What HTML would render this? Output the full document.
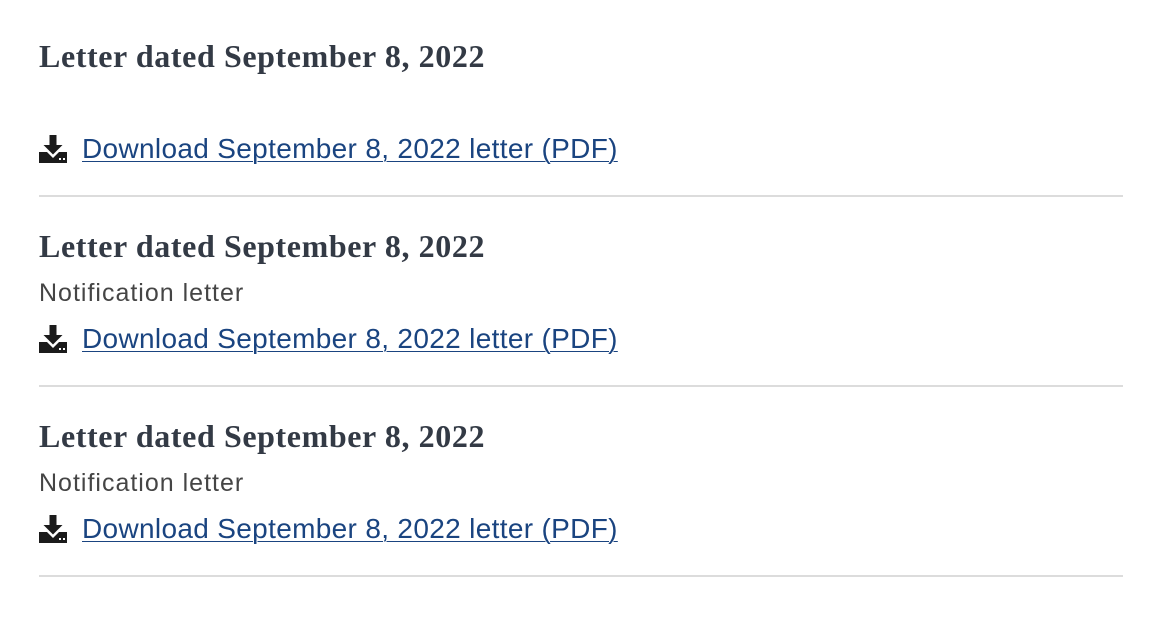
<!DOCTYPE html>
<html><head><style>
body{margin:0;width:1174px;height:624px;background:#fff;position:relative;overflow:hidden}
.h{position:absolute;left:39px;font-family:"Liberation Serif",serif;font-weight:bold;font-size:32px;color:#333a45;line-height:1;white-space:nowrap;letter-spacing:0.6px}
.n{position:absolute;left:39px;font-family:"Liberation Sans",sans-serif;font-size:25px;color:#454545;line-height:1;white-space:nowrap;letter-spacing:1px}
.l{position:absolute;left:39px;font-family:"Liberation Sans",sans-serif;font-size:28px;color:#1a4480;line-height:1;white-space:nowrap;letter-spacing:0.33px}
.l span{text-decoration:underline;text-underline-offset:3px;text-decoration-thickness:1px;margin-left:43px}
.l svg{position:absolute;left:0;top:0px}
.d{position:absolute;left:39px;width:1084px;height:2px;background:#dcdcdc}
</style></head><body>
<div class="h" style="top:40px">Letter dated September 8, 2022</div>
<div class="l" style="top:135px"><svg width="28" height="28" viewBox="0 0 28 28"><path fill="#1b1b1b" d="M10.5 0h7v10h6l-9.5 9.5L4.5 10h6z"/><path fill="#1b1b1b" d="M0 17h8l6 6 6-6h8v11H0z"/><rect x="20" y="23" width="2" height="2" fill="#fff"/><rect x="24" y="23" width="2" height="2" fill="#fff"/></svg><span>Download September 8, 2022 letter (PDF)</span></div>
<div class="d" style="top:195px"></div>

<div class="h" style="top:230px">Letter dated September 8, 2022</div>
<div class="n" style="top:281px">Notification letter</div>
<div class="l" style="top:325px"><svg width="28" height="28" viewBox="0 0 28 28"><path fill="#1b1b1b" d="M10.5 0h7v10h6l-9.5 9.5L4.5 10h6z"/><path fill="#1b1b1b" d="M0 17h8l6 6 6-6h8v11H0z"/><rect x="20" y="23" width="2" height="2" fill="#fff"/><rect x="24" y="23" width="2" height="2" fill="#fff"/></svg><span>Download September 8, 2022 letter (PDF)</span></div>
<div class="d" style="top:385px"></div>

<div class="h" style="top:420px">Letter dated September 8, 2022</div>
<div class="n" style="top:471px">Notification letter</div>
<div class="l" style="top:515px"><svg width="28" height="28" viewBox="0 0 28 28"><path fill="#1b1b1b" d="M10.5 0h7v10h6l-9.5 9.5L4.5 10h6z"/><path fill="#1b1b1b" d="M0 17h8l6 6 6-6h8v11H0z"/><rect x="20" y="23" width="2" height="2" fill="#fff"/><rect x="24" y="23" width="2" height="2" fill="#fff"/></svg><span>Download September 8, 2022 letter (PDF)</span></div>
<div class="d" style="top:575px"></div>
</body></html>
